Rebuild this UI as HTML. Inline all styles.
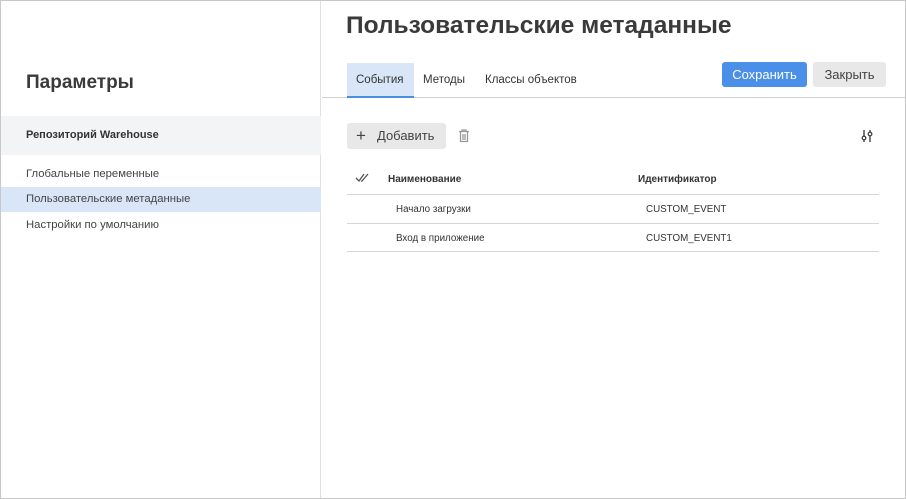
<!DOCTYPE html>
<html><head><meta charset="utf-8"><style>
*{margin:0;padding:0;box-sizing:border-box}
body{width:906px;height:499px;overflow:hidden;font-family:"Liberation Sans",Arial,sans-serif;color:#333;background:#fff}
.frame{position:absolute;left:0;top:0;width:906px;height:499px;border:1px solid #c8c8c8}
.side{position:absolute;left:1px;top:1px;width:320px;height:497px;border-right:1px solid #e0e0e0}
.abs{position:absolute;white-space:nowrap}
</style></head><body>
<div class="frame"></div>
<div class="side"></div>
<div class="abs" style="left:26px;top:72px;font-size:19px;font-weight:bold;color:#3a3a3a">Параметры</div>
<div class="abs" style="left:1px;top:116px;width:320px;height:39px;background:#f3f4f6"></div>
<div class="abs" style="left:26px;top:129px;font-size:11px;font-weight:bold;color:#333">Репозиторий Warehouse</div>
<div class="abs" style="left:26px;top:168px;font-size:11.3px;color:#444">Глобальные переменные</div>
<div class="abs" style="left:1px;top:187px;width:320px;height:25px;background:#d9e6f8"></div>
<div class="abs" style="left:26px;top:193px;font-size:11.3px;color:#444">Пользовательские метаданные</div>
<div class="abs" style="left:26px;top:219px;font-size:11.3px;color:#444">Настройки по умолчанию</div>

<div class="abs" style="left:346px;top:12px;font-size:24.5px;font-weight:bold;color:#3a3a3a">Пользовательские метаданные</div>
<div class="abs" style="left:322px;top:97px;width:583px;height:1px;background:#d0d0d0"></div>
<div class="abs" style="left:347px;top:63px;width:67px;height:35px;background:#d9e6f8;border-bottom:2px solid #4a90e2"></div>
<div class="abs" style="left:356px;top:74px;font-size:11.5px;color:#333">События</div>
<div class="abs" style="left:423px;top:74px;font-size:11.5px;color:#333">Методы</div>
<div class="abs" style="left:485px;top:74px;font-size:11.5px;color:#333">Классы объектов</div>
<div class="abs" style="left:722px;top:62px;width:85px;height:25px;background:#4a8fe8;border-radius:3px;color:#fff;font-size:13px;text-align:center;line-height:25px">Сохранить</div>
<div class="abs" style="left:813px;top:62px;width:73px;height:25px;background:#e8e8e8;border-radius:3px;color:#444;font-size:13px;text-align:center;line-height:25px">Закрыть</div>

<div class="abs" style="left:347px;top:123px;width:99px;height:26px;background:#e8e8e8;border-radius:3px"></div>
<div class="abs" style="left:356px;top:126px;font-size:17px;color:#444">+</div>
<div class="abs" style="left:377px;top:128px;font-size:13px;color:#444">Добавить</div>
<svg class="abs" style="left:458px;top:129px" width="12" height="14" viewBox="0 0 12 14"><path d="M1 2.5h10M4 2.5V1h4v1.5M2.5 2.5v10h7v-10M5 5v6M7 5v6" stroke="#999" stroke-width="1.3" fill="none"/></svg>
<svg class="abs" style="left:860px;top:129px" width="14" height="14" viewBox="0 0 14 14"><path d="M4 1v12M10 1v12" stroke="#444" stroke-width="1.4"/><circle cx="4" cy="9" r="1.8" fill="#fff" stroke="#444" stroke-width="1.3"/><circle cx="10" cy="5" r="1.8" fill="#fff" stroke="#444" stroke-width="1.3"/></svg>

<svg class="abs" style="left:355px;top:173px" width="16" height="10" viewBox="0 0 16 10"><path d="M1 5l3 3 5-7M6 8l1 0 6-7" stroke="#555" stroke-width="1.3" fill="none"/></svg>
<div class="abs" style="left:388px;top:174px;font-size:10px;font-weight:bold;color:#333">Наименование</div>
<div class="abs" style="left:638px;top:174px;font-size:10px;font-weight:bold;color:#333">Идентификатор</div>
<div class="abs" style="left:347px;top:194px;width:532px;height:1px;background:#d6d6d6"></div>
<div class="abs" style="left:396px;top:204px;font-size:9.8px;color:#333">Начало загрузки</div>
<div class="abs" style="left:646px;top:204px;font-size:9.8px;color:#333">CUSTOM_EVENT</div>
<div class="abs" style="left:347px;top:223px;width:532px;height:1px;background:#d6d6d6"></div>
<div class="abs" style="left:396px;top:233px;font-size:9.8px;color:#333">Вход в приложение</div>
<div class="abs" style="left:646px;top:233px;font-size:9.8px;color:#333">CUSTOM_EVENT1</div>
<div class="abs" style="left:347px;top:251px;width:532px;height:1px;background:#d6d6d6"></div>
</body></html>
